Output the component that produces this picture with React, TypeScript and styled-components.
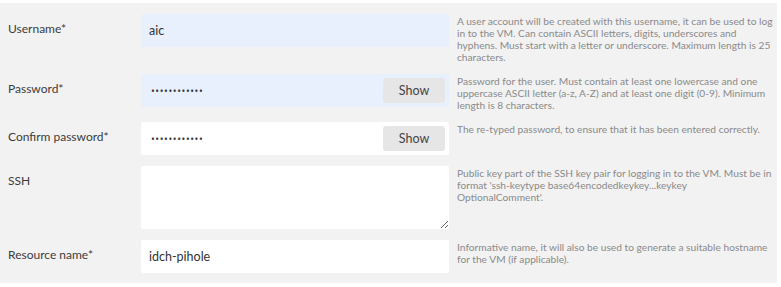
import React from "react"
import styled, { createGlobalStyle } from "styled-components"

const GlobalStyle = createGlobalStyle`
  html, body {
    margin: 0;
    padding: 0;
    background: #ffffff;
  }
`

const fontStack = `Lato, "Open Sans", sans-serif`

const Panel = styled.div`
  background: #f2f2f2;
  box-sizing: border-box;
  display: flex;
  flex-direction: column;
  font-family: ${fontStack};
  gap: 11px;
  height: 280px;
  margin-top: 3px;
  padding: 11px 0 0 8px;
  width: 777px;
`

const Row = styled.div`
  align-items: flex-start;
  display: grid;
  grid-template-columns: 133px 308px 1fr;
`

const Label = styled.label`
  color: #3c3c3c;
  font-size: 12px;
  line-height: 16px;
  padding-top: 7px;
`

interface FieldProps {
  $filled?: boolean
}

const InputBox = styled.div<FieldProps>`
  align-items: center;
  background: ${(props): string => (props.$filled ? "#e8f0fe" : "#ffffff")};
  border-radius: 2px;
  box-sizing: border-box;
  display: flex;
  height: 33px;
  padding: 0 4px 0 8px;
`

const Input = styled.input`
  background: transparent;
  border: none;
  color: #333333;
  flex: 1;
  font-family: ${fontStack};
  font-size: 12.5px;
  min-width: 0;
  outline: none;
  padding: 0;

  &[type="password"] {
    font-family: "Open Sans", sans-serif;
    font-size: 10px;
    letter-spacing: 0.6px;
    padding-left: 2px;
  }
`

const ShowButton = styled.button`
  background: #e6e6e6;
  border: none;
  border-radius: 3px;
  color: #444444;
  font-family: ${fontStack};
  font-size: 12.5px;
  height: 25px;
  padding: 0;
  width: 62px;
`

const TextArea = styled.textarea`
  background: #ffffff;
  border: none;
  border-radius: 2px;
  box-sizing: border-box;
  display: block;
  font-family: ${fontStack};
  font-size: 12px;
  height: 63px;
  outline: none;
  padding: 6px 8px;
  resize: vertical;
  width: 308px;
`

const Help = styled.p`
  color: #8a8a8a;
  font-size: 10.2px;
  line-height: 12px;
  margin: 0;
  max-width: 316px;
  padding: 1px 0 0 8px;
`

interface FieldDef {
  label: string
  help: string
  kind: "text" | "password" | "textarea"
  value?: string
  filled?: boolean
}

const fields: FieldDef[] = [
  {
    label: "Username*",
    kind: "text",
    value: "aic",
    filled: true,
    help: "A user account will be created with this username, it can be used to log in to the VM. Can contain ASCII letters, digits, underscores and hyphens. Must start with a letter or underscore. Maximum length is 25 characters.",
  },
  {
    label: "Password*",
    kind: "password",
    value: "aaaaaaaaaaaa",
    filled: true,
    help: "Password for the user. Must contain at least one lowercase and one uppercase ASCII letter (a-z, A-Z) and at least one digit (0-9). Minimum length is 8 characters.",
  },
  {
    label: "Confirm password*",
    kind: "password",
    value: "aaaaaaaaaaaa",
    help: "The re-typed password, to ensure that it has been entered correctly.",
  },
  {
    label: "SSH",
    kind: "textarea",
    help: "Public key part of the SSH key pair for logging in to the VM. Must be in format 'ssh-keytype base64encodedkeykey...keykey OptionalComment'.",
  },
  {
    label: "Resource name*",
    kind: "text",
    value: "idch-pihole",
    help: "Informative name, it will also be used to generate a suitable hostname for the VM (if applicable).",
  },
]

const Control: React.FC<{ field: FieldDef }> = ({ field }) => {
  if (field.kind === "textarea") {
    return <TextArea />
  }
  return (
    <InputBox $filled={field.filled}>
      <Input type={field.kind} defaultValue={field.value} />
      {field.kind === "password" && <ShowButton>Show</ShowButton>}
    </InputBox>
  )
}

export default function App(): React.ReactElement {
  return (
    <>
      <GlobalStyle />
      <Panel>
        {fields.map(field => (
          <Row key={field.label}>
            <Label>{field.label}</Label>
            <Control field={field} />
            <Help>{field.help}</Help>
          </Row>
        ))}
      </Panel>
    </>
  )
}
